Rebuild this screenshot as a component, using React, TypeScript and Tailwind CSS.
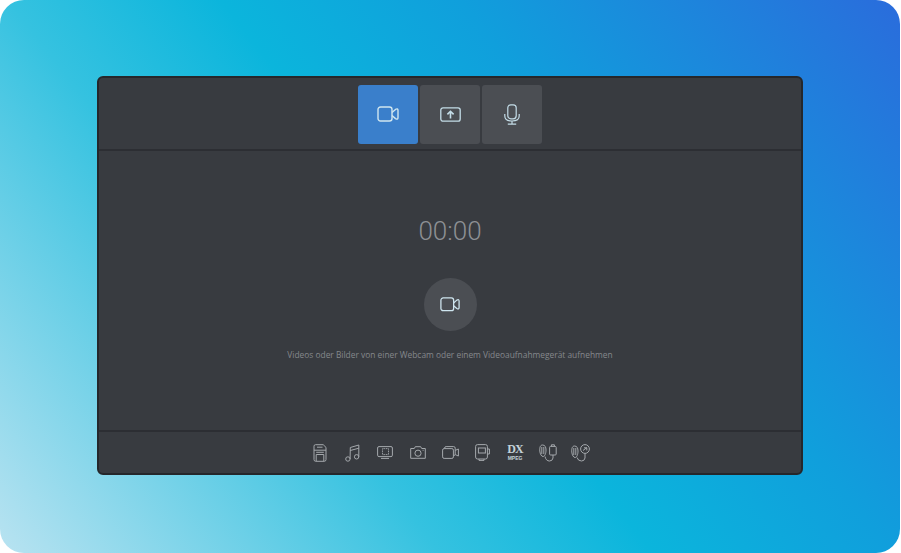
import React from "react";

const stroke = "#c4dde8";
const Cam = ({ size = 22, color = "#cfe6f0" }: { size?: number; color?: string }) => (
  <svg width={size} height={size * 0.73} viewBox="0 0 22 16" fill="none" stroke={color} strokeWidth="1.4" strokeLinejoin="round">
    <rect x="1" y="1" width="14" height="14" rx="2.5" />
    <path d="M15 6.5 L18.5 3.4 Q21 2 21 4.5 V11.5 Q21 14 18.5 12.6 L15 9.5" />
  </svg>
);

const Upload = () => (
  <svg width="21" height="15" viewBox="0 0 21 15" fill="none" stroke={stroke} strokeWidth="1.3">
    <rect x=".8" y=".8" width="19.4" height="13.4" rx="2.2" />
    <path d="M10.5 11.5 V4.6 M7.4 7.4 L10.5 4.3 L13.6 7.4" strokeWidth="1.6" />
  </svg>
);

const Mic = () => (
  <svg width="16" height="21" viewBox="0 0 16 21" fill="none" stroke={stroke} strokeWidth="1.2">
    <rect x="3.8" y=".8" width="8.4" height="14" rx="3" />
    <path d="M.8 10 V12 Q.8 17 8 17 Q15.2 17 15.2 12 V10 M8 17 V20 M3.8 20.2 H12.2" />
  </svg>
);

const g = "#a4a8ac";
const Sd = () => (
  <svg width="14" height="18" viewBox="0 0 14 18" fill="none" stroke={g} strokeWidth="1">
    <path d="M2.5 .7 H10.2 L13 3.4 V15.5 Q13 17.3 11.3 17.3 H2.7 Q1 17.3 1 15.5 V2.2 Q1 .7 2.5 .7 Z" />
    <path d="M4 3.2 H9.5 M1 6.2 H13 M3.2 17 V10.5 H10.8 V17 M3.2 8.3 H10.8" />
  </svg>
);
const Music = () => (
  <svg width="15" height="18" viewBox="0 0 15 18" fill="none" stroke={g} strokeWidth="1">
    <circle cx="2.9" cy="15" r="2.2" />
    <circle cx="11.6" cy="12.8" r="2.2" />
    <path d="M5.1 15 L5.3 3.5 L13.8 1 V12.8 M5.3 6.5 L13.8 4.2" />
  </svg>
);
const Tv = () => (
  <svg width="16" height="13" viewBox="0 0 16 13" fill="none" stroke={g} strokeWidth="1">
    <rect x=".6" y=".6" width="14.8" height="10" rx="1.4" />
    <path d="M4 12.4 H12" />
    <rect x="5.5" y="2.6" width="6" height="6" strokeDasharray="1 .7" />
  </svg>
);
const Camera = () => (
  <svg width="16" height="13" viewBox="0 0 16 13" fill="none" stroke={g} strokeWidth="1">
    <path d="M.7 2.5 H4.3 L5.3 .7 H10.7 L11.7 2.5 H15.3 V12.3 H.7 Z" strokeLinejoin="round" />
    <circle cx="8" cy="7.2" r="3.1" />
    <path d="M12.6 4.3 H13.6" />
  </svg>
);
const Clip = () => (
  <svg width="17" height="13" viewBox="0 0 17 13" fill="none" stroke={g} strokeWidth="1">
    <rect x="2.6" y=".6" width="10.6" height="9" rx="1.5" />
    <rect x=".6" y="2.6" width="10.8" height="9.8" rx="1.5" fill="#383b40" />
    <path d="M13.2 4.4 L16.4 3 V10 L13.2 8.6" />
  </svg>
);
const Board = () => (
  <svg width="15" height="17" viewBox="0 0 15 17" fill="none" stroke={g} strokeWidth="1">
    <path d="M2.5 .6 H10.5 Q12.4 .6 12.4 2.5 V13 Q12.4 15 10.5 15 H2.5 Q.6 15 .6 13 V2.5 Q.6 .6 2.5 .6 Z" />
    <rect x="3.4" y="4" width="7" height="5" />
    <path d="M12.4 5 H14.4 V10 H12.4 M4 15 V16.4 H9 V15" />
  </svg>
);
const Watch = () => (
  <svg width="18" height="18" viewBox="0 0 18 18" fill="none" stroke={g} strokeWidth="1">
    <path d="M3.5 1 C1 1 .6 4 .8 7 C1 10 2.5 12.5 4 12.5 C6 12.5 7 9 7 6 C7 3 6 1 3.5 1 Z" />
    <path d="M2.8 3 V10 M4.8 3 V10" />
    <rect x="10.6" y="2.4" width="6.6" height="8.6" rx="1" />
    <path d="M12.4 2.4 V.8 H15.4 V2.4 M14 11 V14 Q13.5 17 10.5 17 Q7 17 6 12.5" />
  </svg>
);
const Phone = () => (
  <svg width="19" height="18" viewBox="0 0 19 18" fill="none" stroke={g} strokeWidth="1">
    <path d="M3.5 2 C1 2 .6 5 .8 8 C1 11 2.5 13.5 4 13.5 C6 13.5 7 10 7 7 C7 4 6 2 3.5 2 Z" />
    <path d="M2.8 4 V11 M4.8 4 V11" />
    <circle cx="14" cy="5" r="4.4" />
    <path d="M12 6.5 L15.8 3.6 M13 3.8 H15.8 V6.4" />
    <path d="M14 9.4 V14 Q13.5 17 10.5 17 Q7 17 6 13.5" />
  </svg>
);

const Cell = ({ children }: { children: React.ReactNode }) => (
  <div className="flex w-[32.5px] shrink-0 items-center justify-center">{children}</div>
);

export default function App() {
  const tabBase = "flex h-[59px] w-[60px] items-center justify-center rounded-[3px]";
  return (
    <div className="h-[553px] w-[901px] bg-white font-['Open_Sans',sans-serif]">
      <div className="h-[553px] w-[900px] rounded-[24px] bg-[linear-gradient(52deg,#b9e3f1_0%,#35c2e0_33%,#0bb5dc_49%,#109fdc_67%,#2a6cdc_100%)] pl-[97px] pt-[76px]">
        <div className="flex h-[399px] w-[706px] flex-col rounded-[6px] border-2 border-[#25272b] bg-[#383b40]">
          <div className="flex h-[73px] shrink-0 items-start justify-center gap-[2px] border-b-2 border-[#2c2e33] pt-[7px]">
            <div className={`${tabBase} bg-[#3a7fcb]`}><Cam /></div>
            <div className={`${tabBase} bg-[#4b4e53]`}><Upload /></div>
            <div className={`${tabBase} bg-[#4b4e53]`}><Mic /></div>
          </div>
          <div className="flex flex-1 flex-col items-center">
            <div className="mt-[61px] h-[38px] font-['Roboto',sans-serif] text-[26px] font-light leading-[38px] text-[#8d9094]">00:00</div>
            <div className="mt-[28px] flex h-[53px] w-[53px] items-center justify-center rounded-full bg-[#4b4e53]"><Cam size={20} /></div>
            <div className="mt-[17px] text-[8.4px] leading-[14px] text-[#85888c]">Videos oder Bilder von einer Webcam oder einem Videoaufnahmegerät aufnehmen</div>
          </div>
          <div className="flex h-[43px] shrink-0 items-center justify-center border-t-2 border-[#2c2e33]">
            <Cell><Sd /></Cell>
            <Cell><Music /></Cell>
            <Cell><Tv /></Cell>
            <Cell><Camera /></Cell>
            <Cell><Clip /></Cell>
            <Cell><Board /></Cell>
            <Cell>
              <div className="flex w-[18px] flex-col items-center text-[#c3d2d9]">
                <span className="font-['Liberation_Serif',serif] text-[12px] font-bold leading-[10px] tracking-[-1px]">DX</span>
                <span className="mt-[2px] font-['Liberation_Sans',sans-serif] text-[5px] font-bold leading-[5px]">MPEG</span>
              </div>
            </Cell>
            <Cell><Watch /></Cell>
            <Cell><Phone /></Cell>
          </div>
        </div>
      </div>
    </div>
  );
}
